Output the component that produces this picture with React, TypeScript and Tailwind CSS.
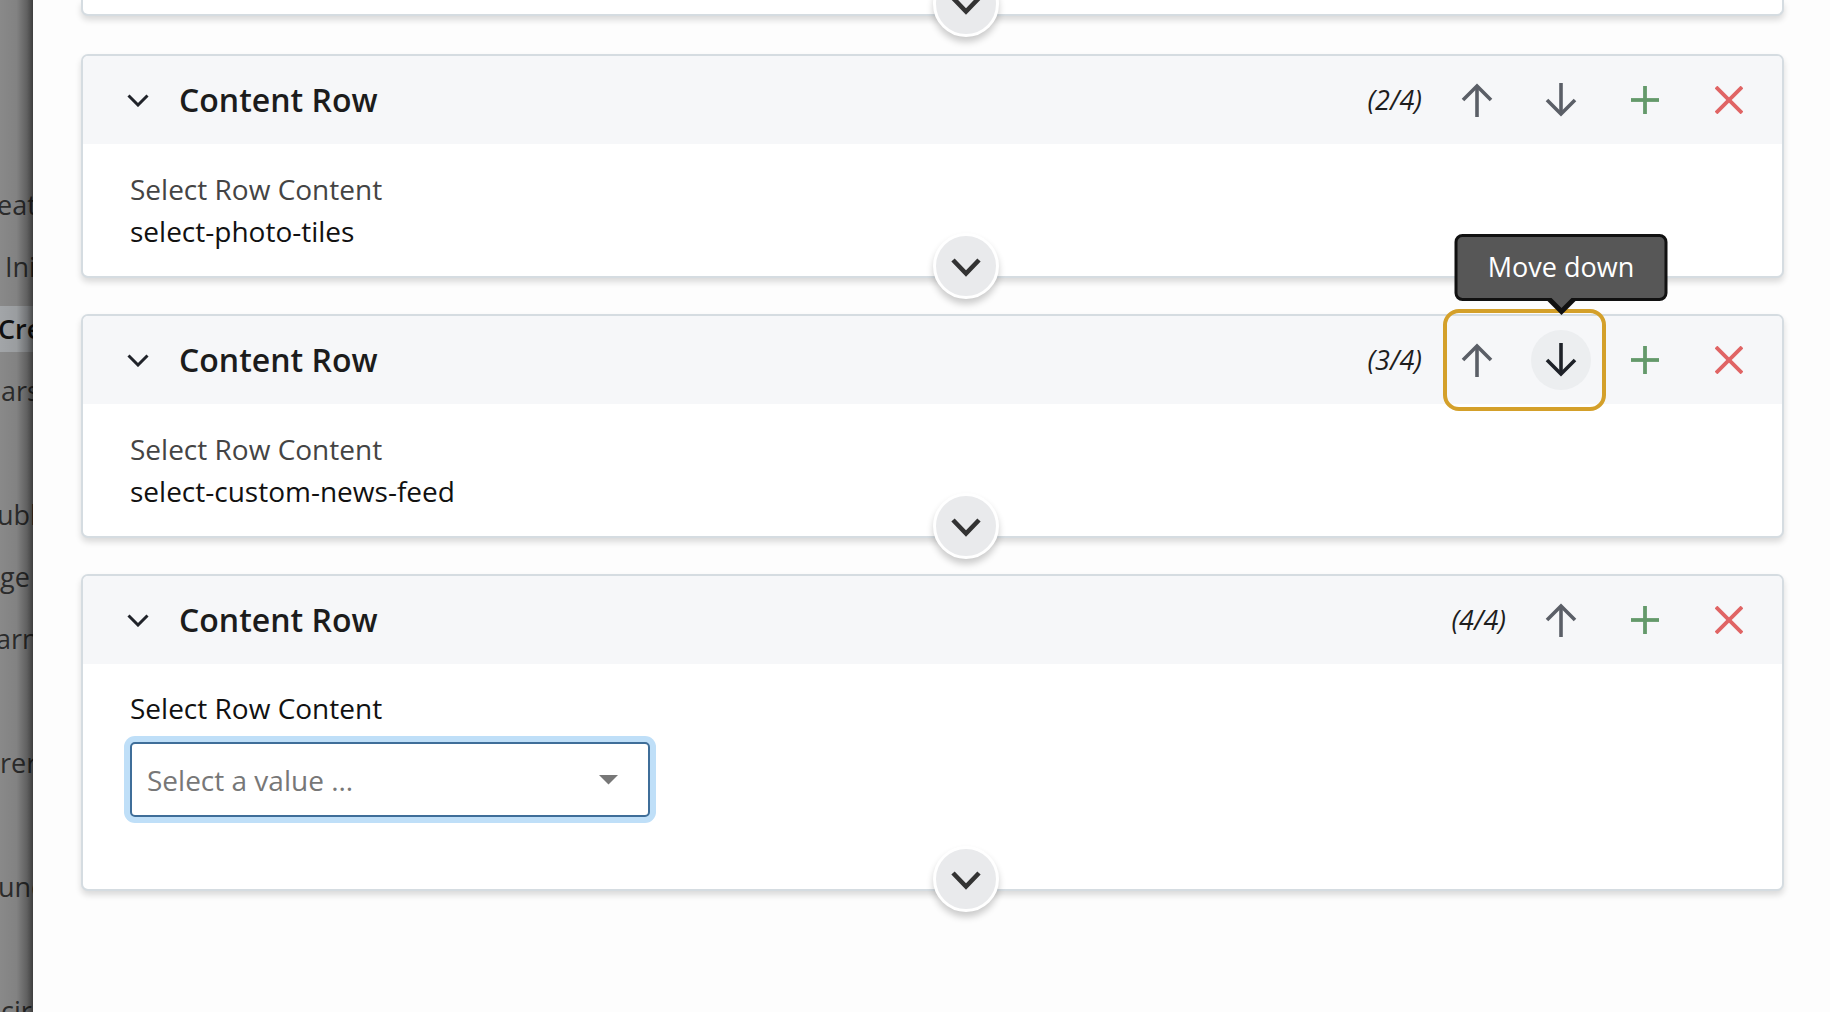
import React from "react";

const ArrowUp = () => (
  <svg width="32" height="34" viewBox="0 0 32 34" fill="none" stroke="currentColor" strokeWidth="3.6">
    <path d="M16 34V3" />
    <path d="M2 17L16 3L30 17" />
  </svg>
);

const ArrowDown = () => (
  <svg width="32" height="34" viewBox="0 0 32 34" fill="none" stroke="currentColor" strokeWidth="3.6">
    <path d="M16 0V31" />
    <path d="M2 17L16 31L30 17" />
  </svg>
);

const Plus = () => (
  <svg width="28" height="28" viewBox="0 0 28 28" fill="none" stroke="currentColor" strokeWidth="3.8">
    <path d="M14 0V28" />
    <path d="M0 14H28" />
  </svg>
);

const Cross = () => (
  <svg width="28" height="28" viewBox="0 0 28 28" fill="none" stroke="currentColor" strokeWidth="3.8">
    <path d="M1 1L27 27" />
    <path d="M27 1L1 27" />
  </svg>
);

const SmallChevron = () => (
  <svg width="22" height="13" viewBox="0 0 22 13" fill="none" stroke="#20232a" strokeWidth="3">
    <path d="M1.5 1.5L11 11L20.5 1.5" />
  </svg>
);

const CircleChevron = () => (
  <svg width="30" height="19" viewBox="0 0 30 19" fill="none" stroke="#333" strokeWidth="4.6">
    <path d="M2 2L15 15.5L28 2" />
  </svg>
);

const CircleButton = () => (
  <div className="absolute left-1/2 bottom-[-23px] w-[66px] h-[66px] rounded-full bg-[#e9eaec] border-[3px] border-white shadow-[0_5px_7px_rgba(0,0,0,0.2)] flex items-center justify-center pt-[3px] z-10">
    <CircleChevron />
  </div>
);

const IconBtn = ({ children, className = "" }: { children: React.ReactNode; className?: string }) => (
  <div className={"relative w-[60px] h-[60px] rounded-full flex items-center justify-center " + className}>{children}</div>
);

type CardProps = {
  count: string;
  showDown: boolean;
  highlight?: boolean;
  children: React.ReactNode;
  bodyClass: string;
};

const Card = ({ count, showDown, highlight, children, bodyClass }: CardProps) => (
  <div className="relative bg-white border-2 border-[#d5dce1] rounded-[7px] shadow-[0_4px_6px_rgba(0,0,0,0.14)] mb-[36px]">
    <div className="h-[88px] bg-[#f6f7f9] rounded-t-[5px] flex items-center pl-[44px] pr-[23px]">
      <SmallChevron />
      <div className="ml-[30px] text-[32px] font-semibold text-[#1c1c1c] leading-none">Content Row</div>
      <div className="ml-auto flex items-center gap-6">
        <div className="text-[27px] italic text-[#1e1e1e] mr-[1px]">{count}</div>
        <IconBtn className="text-[#5b5f67]">
          {highlight && (
            <div className="absolute left-[-4px] top-[-21px] w-[163px] h-[102px] border-4 border-[#d4a02a] rounded-[16px] pointer-events-none" />
          )}
          <ArrowUp />
        </IconBtn>
        {showDown && (
          <IconBtn className={highlight ? "bg-[#eceef0] text-[#1e2128]" : "text-[#5b5f67]"}>
            {highlight && (
              <div className="absolute bottom-[89px] left-1/2 -translate-x-1/2 z-20">
                <div className="w-[213px] h-[67px] bg-[#575757] border-[3px] border-[#111] rounded-[8px] text-white text-[27px] flex items-center justify-center whitespace-nowrap">
                  Move down
                </div>
                <div className="absolute left-1/2 -translate-x-1/2 top-[64px] w-0 h-0 border-l-[17px] border-r-[17px] border-t-[17px] border-l-transparent border-r-transparent border-t-[#111]" />
                <div className="absolute left-1/2 -translate-x-1/2 top-[62px] w-0 h-0 border-l-[12px] border-r-[12px] border-t-[12px] border-l-transparent border-r-transparent border-t-[#575757]" />
              </div>
            )}
            <ArrowDown />
          </IconBtn>
        )}
        <IconBtn className="text-[#64996a]">
          <Plus />
        </IconBtn>
        <IconBtn className="text-[#e06464]">
          <Cross />
        </IconBtn>
      </div>
    </div>
    <div className={"pl-[47px] " + bodyClass}>{children}</div>
    <CircleButton />
  </div>
);

const sideItems: { t: string; ml: number; active?: boolean }[] = [
  { t: "eat", ml: -3 },
  { t: "Ini", ml: 5 },
  { t: "Cre", ml: -2, active: true },
  { t: "ars", ml: 1 },
  { t: "", ml: 0 },
  { t: "ubl", ml: -3 },
  { t: "ge", ml: 0 },
  { t: "arn", ml: -4 },
  { t: "", ml: 0 },
  { t: "rer", ml: 0 },
  { t: "", ml: 0 },
  { t: "unc", ml: -2 },
  { t: "", ml: 0 },
  { t: "cir", ml: 1 },
];

export default function App() {
  return (
    <div className="w-full h-[1012px] overflow-hidden flex bg-[#fdfdfd] font-['Open_Sans',sans-serif]">
      <div className="relative w-[33px] shrink-0 h-full overflow-hidden bg-[#898989]">
        <div className="pt-[174px] text-[27px] text-[#2c2c2c] whitespace-nowrap">
          {sideItems.map((it, i) => (
            <div key={i} className="h-[62px] flex items-center">
              {it.active ? (
                <div className="w-full h-[46px] bg-[#a2a5a8] flex items-center">
                  <span className="font-semibold text-[#111]" style={{ marginLeft: it.ml }}>{it.t}</span>
                </div>
              ) : (
                <span style={{ marginLeft: it.ml }}>{it.t}</span>
              )}
            </div>
          ))}
        </div>
        <div className="absolute inset-0 pointer-events-none bg-[linear-gradient(to_right,rgba(0,0,0,0)_0%,rgba(0,0,0,0.05)_50%,rgba(0,0,0,0.3)_82%,rgba(0,0,0,0.55)_100%)]" />
      </div>
      <div className="flex-1 pl-[48px] pr-[46px]">
        <div className="relative h-[16px] bg-white border-2 border-t-0 border-[#d5dce1] rounded-b-[7px] shadow-[0_4px_6px_rgba(0,0,0,0.14)] mb-[38px]">
          <CircleButton />
        </div>
        <Card count="(2/4)" showDown bodyClass="h-[132px] pt-[27px]">
          <div className="text-[28px] leading-[36px] text-[#444]">Select Row Content</div>
          <div className="mt-[6px] text-[28px] leading-[36px] text-[#111]">select-photo-tiles</div>
        </Card>
        <Card count="(3/4)" showDown highlight bodyClass="h-[132px] pt-[27px]">
          <div className="text-[28px] leading-[36px] text-[#444]">Select Row Content</div>
          <div className="mt-[6px] text-[28px] leading-[36px] text-[#111]">select-custom-news-feed</div>
        </Card>
        <Card count="(4/4)" showDown={false} bodyClass="h-[225px] pt-[26px]">
          <div className="text-[28px] leading-[36px] text-[#111]">Select Row Content</div>
          <div className="mt-[16px] w-[520px] h-[75px] border-2 border-[#3f6e99] rounded-[5px] shadow-[0_0_0_6px_#bfdff8] bg-white flex items-center pl-[15px] pr-[30px]">
            <span className="text-[28px] text-[#777]">Select a value ...</span>
            <svg className="ml-auto" width="19" height="10" viewBox="0 0 19 10">
              <polygon points="0,0 19,0 9.5,9.5" fill="#777" />
            </svg>
          </div>
        </Card>
      </div>
    </div>
  );
}
